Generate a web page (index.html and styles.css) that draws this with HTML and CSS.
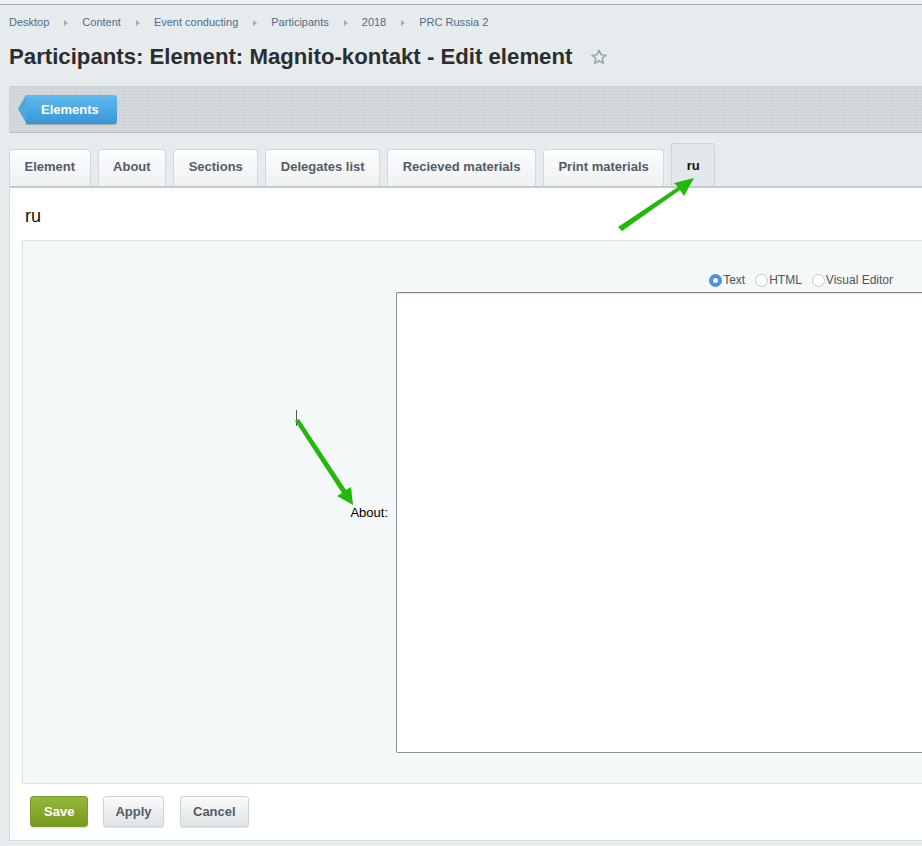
FILE: index.html
```html
<!DOCTYPE html>
<html lang="en">
<head>
    <meta charset="UTF-8">
    <title>Participants: Element: Magnito-kontakt - Edit element</title>
    <link rel="stylesheet" href="styles.css">
</head>
<body>
    <div class="topbar"></div>
    <div class="page">
        <div class="breadcrumbs">
            <a href="#">Desktop</a><span class="sep"></span>
            <a href="#">Content</a><span class="sep"></span>
            <a href="#">Event conducting</a><span class="sep"></span>
            <a href="#">Participants</a><span class="sep"></span>
            <a href="#">2018</a><span class="sep"></span>
            <a href="#">PRC Russia 2</a>
        </div>
        <h1 class="title">Participants: Element: Magnito-kontakt - Edit element
            <svg class="star" width="18" height="18" viewBox="0 0 24 24"><path d="M12 2.8l2.7 6.1 6.6.6-5 4.4 1.5 6.5L12 17l-5.8 3.4 1.5-6.5-5-4.4 6.6-.6z" fill="none" stroke="#9aa4ad" stroke-width="2" stroke-linejoin="round"/></svg>
        </h1>
        <div class="toolbar">
            <a href="#" class="btn-back">Elements</a>
        </div>
        <div class="tabs">
            <div class="tab">Element</div>
            <div class="tab">About</div>
            <div class="tab">Sections</div>
            <div class="tab">Delegates list</div>
            <div class="tab">Recieved materials</div>
            <div class="tab">Print materials</div>
            <div class="tab active">ru</div>
        </div>
        <div class="panel">
            <div class="panel-title">ru</div>
            <div class="form-box">
                <div class="form-row">
                    <div class="form-label">About:</div>
                    <div class="form-field">
                        <div class="radios">
                            <label class="radio"><span class="dot checked"></span>Text</label>
                            <label class="radio"><span class="dot"></span>HTML</label>
                            <label class="radio"><span class="dot"></span>Visual Editor</label>
                        </div>
                        <div class="textarea"></div>
                    </div>
                </div>
            </div>
            <div class="buttons">
                <button class="btn btn-save">Save</button>
                <button class="btn">Apply</button>
                <button class="btn btn-cancel">Cancel</button>
            </div>
        </div>
    </div>

    <!-- annotation arrows from the screenshot -->
    <svg class="annot" width="922" height="846" viewBox="0 0 922 846">
        <line x1="296.5" y1="410" x2="296.5" y2="426" stroke="#555" stroke-width="1"/>
        <polygon points="618,227 622,231 680,190 684,196 694,178 674,183 678,187" fill="#23b80c"/>
        <polygon points="295,421 299,419 346,490 351,487 353,505 337,496 342,493" fill="#23b80c"/>
    </svg>
</body>
</html>
```

FILE: styles.css
```css
body {
    margin: 0;
    overflow: hidden;
    font-family: "Liberation Sans", Arial, sans-serif;
    background: #e6ebed;
    color: #333;
}
.topbar {
    height: 4px;
    background: #eef1f2;
    border-bottom: 1px solid #a4a9ac;
}
.page {
    width: 980px;
    padding-left: 9px;
}
.breadcrumbs {
    display: flex;
    align-items: center;
    padding-top: 11px;
    font-size: 11px;
    line-height: 13px;
}
.breadcrumbs a {
    color: #4f6c8a;
    text-decoration: none;
}
.sep {
    width: 0;
    height: 0;
    margin: 0 14px 0 15px;
    border-top: 3px solid transparent;
    border-bottom: 3px solid transparent;
    border-left: 4px solid #a6adb2;
}
.title {
    display: flex;
    align-items: center;
    margin: 15px 0 0;
    font-size: 22.2px;
    line-height: 26px;
    font-weight: bold;
    color: #2a2e31;
}
.star {
    margin-left: 18px;
}
.toolbar {
    margin-top: 16px;
    padding: 8px 0 0 8px;
    box-sizing: border-box;
    height: 47px;
    background-color: #d3d8dc;
    background-image: radial-gradient(#c3c9cd 1px, transparent 1px);
    background-size: 3px 3px;
    border: 1px solid #c9ced1;
    border-bottom-color: #b4babe;
    border-radius: 2px 0 0 2px;
}
.btn-back {
    display: inline-block;
    position: relative;
    margin-left: 8px;
    height: 29px;
    line-height: 29px;
    padding: 0 18px 0 15px;
    color: #fff;
    font-size: 13px;
    font-weight: bold;
    text-decoration: none;
    background: linear-gradient(#5dbbee, #3a95d6);
    border-radius: 0 3px 3px 0;
    box-shadow: 0 1px 1px rgba(0,0,0,0.2);
}
.btn-back::before {
    content: "";
    position: absolute;
    left: -8px;
    top: 0;
    width: 0;
    height: 0;
    border-top: 14.5px solid transparent;
    border-bottom: 14.5px solid transparent;
    border-right: 8px solid #4aa8e3;
}
.tabs {
    display: flex;
    align-items: flex-end;
    gap: 7px;
    margin-top: 10px;
}
.tab {
    height: 37px;
    padding: 0 14.5px;
    box-sizing: border-box;
    line-height: 34px;
    font-size: 13px;
    font-weight: bold;
    color: #535c66;
    background: linear-gradient(#fcfdfd, #eef1f2);
    border: 1px solid #d2d8db;
    border-bottom: none;
    border-radius: 3px 3px 0 0;
}
.tab.active {
    height: 43px;
    line-height: 44px;
    color: #111;
    background: #e3e8ea;
    border-color: #cdd3d6;
}
.panel {
    background: #fff;
    border-top: 2px solid #c4cacd;
    border-left: 1px solid #d6dbde;
    border-bottom: 1px solid #d6dbde;
}
.panel-title {
    padding: 17px 0 0 15px;
    font-size: 18px;
    line-height: 22px;
    color: #111;
}
.form-box {
    margin: 13px 0 0 12px;
    padding: 31px 0 30px;
    background: #f5f8f9;
    border: 1px solid #dde2e4;
}
.form-row {
    display: flex;
    align-items: center;
}
.form-label {
    width: 365px;
    padding-right: 8px;
    text-align: right;
    font-size: 13px;
    color: #000;
}
.form-field {
    width: 560px;
}
.radios {
    display: flex;
    justify-content: flex-end;
    gap: 10px;
    padding-right: 63px;
    height: 16px;
    margin-bottom: 4px;
    font-size: 12px;
    line-height: 16px;
    color: #4e555b;
}
.radio {
    display: flex;
    align-items: center;
}
.dot {
    width: 13px;
    height: 13px;
    box-sizing: border-box;
    border: 1px solid #c4c7ca;
    border-radius: 50%;
    background: #fff;
    margin-right: 1px;
}
.dot.checked {
    border: 4px solid #4a90e8;
    background: #fff;
}
.textarea {
    height: 461px;
    box-sizing: border-box;
    background: #fff;
    border: 1px solid #8d9399;
    border-top-color: #7b8187;
    border-radius: 2px 0 0 2px;
    box-shadow: inset 0 1px 1px #e6e9eb;
}
.buttons {
    display: flex;
    gap: 15px;
    padding: 12px 0 13px 20px;
}
.btn {
    height: 31px;
    padding: 0 11px;
    font-family: "Liberation Sans", Arial, sans-serif;
    font-size: 13px;
    font-weight: bold;
    color: #535c66;
    background: linear-gradient(#fafbfb, #dfe4e6);
    border: 1px solid #cfd4d7;
    border-radius: 3px;
    box-shadow: 0 1px 1px rgba(0,0,0,0.12);
}
.btn-save {
    padding: 0 13px;
    color: #fff;
    background: linear-gradient(#95b83b, #77991d);
    border-color: #7d9b28;
}
.btn-cancel {
    margin-left: 1px;
    padding: 0 12.5px;
}
.annot {
    position: absolute;
    left: 0;
    top: 0;
    pointer-events: none;
}
```
